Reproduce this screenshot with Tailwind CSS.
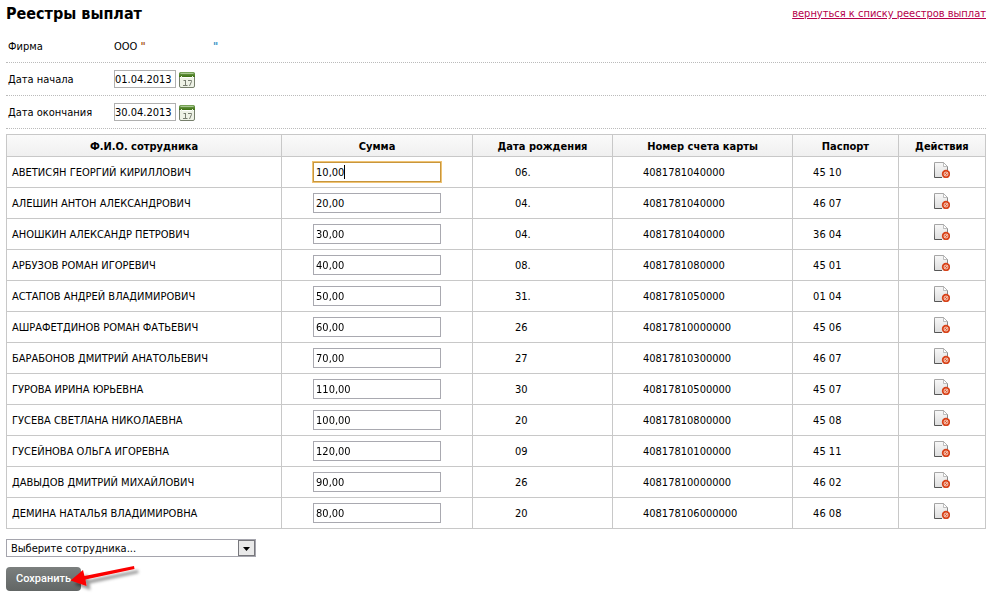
<!DOCTYPE html>
<html lang="ru">
<head>
    <meta charset="UTF-8">
    <meta name="viewport" content="width=device-width, initial-scale=1.0">
    <title>Реестры выплат</title>
    <script src="https://cdn.jsdelivr.net/npm/@tailwindcss/browser@4"></script>
</head>
<body class="bg-white text-black font-['DejaVu_Sans_Condensed','DejaVu_Sans',sans-serif] text-[11px] leading-4">
    <!-- Icons -->
    <svg class="absolute h-0 w-0" aria-hidden="true">
        <defs>
            <linearGradient id="calTop" x1="0" y1="0" x2="0" y2="1">
                <stop offset="0" stop-color="#7ba65c"/>
                <stop offset="1" stop-color="#3c7010"/>
            </linearGradient>
            <linearGradient id="docFill" x1="0" y1="0" x2="0" y2="1">
                <stop offset="0" stop-color="#f8f8f8"/>
                <stop offset="1" stop-color="#dedede"/>
            </linearGradient>
            <linearGradient id="docEdge" x1="0" y1="0" x2="0" y2="1">
                <stop offset="0" stop-color="#a8a8a8"/>
                <stop offset="1" stop-color="#555555"/>
            </linearGradient>
        </defs>
        <symbol id="icon-calendar" viewBox="0 0 16 16">
            <rect x="0.5" y="0.5" width="15" height="15" rx="1.5" fill="#eef2e6" stroke="#767f6c"/>
            <path d="M0 5V2Q0 0 2 0H14Q16 0 16 2V5Z" fill="url(#calTop)"/>
            <path d="M1.5 1.5H14.5" stroke="#a9c890"/>
            <path d="M1 5.500H15" stroke="#ffffff"/>
            <path d="M2.500 6V4M13.500 6V4" stroke="#e4efda"/>
            <path d="M4.500 8.500H6.500M6.500 8V14M4 13.500H8.500M9 8.500H12.500V9.500L10.500 14" fill="none" stroke="#777d70"/>
        </symbol>
        <symbol id="icon-doc-delete" viewBox="0 0 16 16">
            <path d="M0.5 0.5H9.5L13.5 4.5V15.5H0.5Z" fill="url(#docFill)"/>
            <path d="M13.5 8V4.5L9.5 0.5H0.5V15.5H8" fill="none" stroke="url(#docEdge)"/>
            <path d="M9.5 0.5V4.5H13.5Z" fill="#ffffff" stroke="#a5a5a5" stroke-width="0.7"/>
            <circle cx="12" cy="12" r="4.2" fill="#d8431a"/>
            <circle cx="12" cy="12" r="2" fill="#e0582c" stroke="#fbe3da" stroke-width="0.8"/>
            <path d="M10.600 13.400L13.400 10.600" stroke="#fbe3da" stroke-width="0.8"/>
        </symbol>
    </svg>

    <main class="pl-1.5 pr-2.5 pt-1 pb-2">
        <!-- Header -->
        <header class="flex items-start justify-between">
            <h1 class="text-base leading-5 font-bold">Реестры выплат</h1>
            <a href="#" class="pt-0.5 text-[#b5004b] underline">вернуться к списку реестров выплат</a>
        </header>

        <!-- Registry details -->
        <form id="registryForm" class="mt-1.5">
            <div class="flex items-center h-[33px] border-b border-dotted border-[#bbbbbb]">
                <span class="w-[108px] pl-0.5 pt-0.5">Фирма</span>
                <span class="w-[99px] pt-0.5">ООО <span class="font-bold text-[#a85a20]">"</span></span>
                <span class="pt-0.5 font-bold text-[#2f8fc4]">"</span>
            </div>
            <div class="flex items-center h-[33px] border-b border-dotted border-[#bbbbbb]">
                <label for="dateStart" class="w-[108px] pl-0.5 pt-0.5">Дата начала</label>
                <input id="dateStart" type="text" value="01.04.2013" class="w-[62px] h-[18px] border border-[#b0b0b0] bg-white">
                <button type="button" aria-label="Выбрать дату начала" class="ml-[3px] pt-0.5"><svg class="w-4 h-4"><use href="#icon-calendar"/></svg></button>
            </div>
            <div class="flex items-center h-[33px] border-b border-dotted border-[#bbbbbb]">
                <label for="dateEnd" class="w-[108px] pl-0.5 pt-0.5">Дата окончания</label>
                <input id="dateEnd" type="text" value="30.04.2013" class="w-[62px] h-[18px] border border-[#b0b0b0] bg-white">
                <button type="button" aria-label="Выбрать дату окончания" class="ml-[3px] pt-0.5"><svg class="w-4 h-4"><use href="#icon-calendar"/></svg></button>
            </div>
        </form>

        <!-- Payments -->
        <table class="mt-[5px] w-full table-fixed border-collapse border border-[#c8c8c8]">
            <colgroup>
                <col class="w-[28.1%]">
                <col class="w-[19.5%]">
                <col class="w-[14.3%]">
                <col class="w-[18.4%]">
                <col class="w-[10.8%]">
                <col class="w-[8.9%]">
            </colgroup>
            <thead>
                <tr class="h-[22px] bg-linear-to-b from-[#fafafa] to-[#efefef]">
                    <th class="border border-[#c8c8c8] pt-0.5">Ф.И.О. сотрудника</th>
                    <th class="border border-[#c8c8c8] pt-0.5">Сумма</th>
                    <th class="border border-[#c8c8c8] pt-0.5">Дата рождения</th>
                    <th class="border border-[#c8c8c8] pt-0.5">Номер счета карты</th>
                    <th class="border border-[#c8c8c8] pt-0.5">Паспорт</th>
                    <th class="border border-[#c8c8c8] pt-0.5">Действия</th>
                </tr>
            </thead>
            <tbody id="paymentRows"></tbody>
        </table>

        <!-- Add employee -->
        <div class="relative mt-2.5 w-[250px]">
            <select aria-label="Сотрудник" class="block w-full h-[18px] appearance-none border border-[#a5a5ad] bg-white pl-1 pr-5 pt-px leading-4">
                <option>Выберите сотрудника...</option>
            </select>
            <span class="pointer-events-none absolute right-px top-px flex h-4 w-[17px] items-center justify-center border border-[#77777c] bg-[#e9e9e9]">
                <svg class="mt-0.5 h-1 w-[7px]" viewBox="0 0 7 4"><path d="M0 0H7L3.5 4Z" fill="#000000"/></svg>
            </span>
        </div>

        <div class="relative mt-2.5 w-fit">
            <button type="submit" form="registryForm" class="block h-6 w-[75px] rounded-sm bg-linear-to-b from-[#7b7f7e] to-[#626665] text-center font-['Roboto',sans-serif] font-medium text-white">Сохранить</button>
            <!-- Pointer to the save button -->
            <svg class="pointer-events-none absolute left-16 -top-1.5 h-9 w-20" viewBox="0 0 80 36">
                <defs>
                    <filter id="arrowShadow" x="-20%" y="-40%" width="150%" height="200%">
                        <feDropShadow dx="4" dy="4" stdDeviation="1.5" flood-color="#000000" flood-opacity="0.4"/>
                    </filter>
                </defs>
                <path d="M64 5L64.500 8L15.500 18.500L16.500 25L0.500 19.500L13 9L14.500 15Z" fill="#fb0505" filter="url(#arrowShadow)"/>
            </svg>
        </div>
    </main>

    <script>
        const payments = [
            { name: 'АВЕТИСЯН ГЕОРГИЙ КИРИЛЛОВИЧ', sum: '10,00', birth: '06.', card: '4081781040000', passport: '45 10' },
            { name: 'АЛЕШИН АНТОН АЛЕКСАНДРОВИЧ', sum: '20,00', birth: '04.', card: '4081781040000', passport: '46 07' },
            { name: 'АНОШКИН АЛЕКСАНДР ПЕТРОВИЧ', sum: '30,00', birth: '04.', card: '4081781040000', passport: '36 04' },
            { name: 'АРБУЗОВ РОМАН ИГОРЕВИЧ', sum: '40,00', birth: '08.', card: '4081781080000', passport: '45 01' },
            { name: 'АСТАПОВ АНДРЕЙ ВЛАДИМИРОВИЧ', sum: '50,00', birth: '31.', card: '4081781050000', passport: '01 04' },
            { name: 'АШРАФЕТДИНОВ РОМАН ФАТЬЕВИЧ', sum: '60,00', birth: '26', card: '40817810000000', passport: '45 06' },
            { name: 'БАРАБОНОВ ДМИТРИЙ АНАТОЛЬЕВИЧ', sum: '70,00', birth: '27', card: '40817810300000', passport: '46 07' },
            { name: 'ГУРОВА ИРИНА ЮРЬЕВНА', sum: '110,00', birth: '30', card: '40817810500000', passport: '45 07' },
            { name: 'ГУСЕВА СВЕТЛАНА НИКОЛАЕВНА', sum: '100,00', birth: '20', card: '40817810800000', passport: '45 08' },
            { name: 'ГУСЕЙНОВА ОЛЬГА ИГОРЕВНА', sum: '120,00', birth: '09', card: '40817810100000', passport: '45 11' },
            { name: 'ДАВЫДОВ ДМИТРИЙ МИХАЙЛОВИЧ', sum: '90,00', birth: '26', card: '40817810000000', passport: '46 02' },
            { name: 'ДЕМИНА НАТАЛЬЯ ВЛАДИМИРОВНА', sum: '80,00', birth: '20', card: '408178106000000', passport: '46 08' }
        ];

        // Fill the table
        document.getElementById('paymentRows').innerHTML = payments.map((p, i) => `
            <tr class="h-[31px]">
                <td class="border border-[#c8c8c8] pl-[5px] pt-0.5 whitespace-nowrap">${p.name}</td>
                <td class="border border-[#c8c8c8]">
                    <div class="relative mx-auto w-32">
                        <input type="text" value="${p.sum}" aria-label="Сумма: ${p.name}" class="block h-5 w-full border border-[#a9a9b0] bg-white px-0.5 caret-transparent focus:border-[#c8963c] focus:outline-1 focus:outline-[#efc373]">
                        ${i === 0 ? '<span id="caret" class="pointer-events-none absolute left-[31px] top-[3px] h-3.5 w-px bg-black"></span>' : ''}
                    </div>
                </td>
                <td class="border border-[#c8c8c8] pl-[42px] pt-0.5">${p.birth}</td>
                <td class="border border-[#c8c8c8] pl-[30px] pt-0.5">${p.card}</td>
                <td class="border border-[#c8c8c8] pl-5 pt-0.5">${p.passport}</td>
                <td class="border border-[#c8c8c8]">
                    <button type="button" aria-label="Удалить: ${p.name}" class="mx-auto block pb-1"><svg class="h-4 w-4"><use href="#icon-doc-delete"/></svg></button>
                </td>
            </tr>
        `).join('');

        // Start editing from the first sum
        const firstSum = document.querySelector('#paymentRows input');
        firstSum.focus();
        firstSum.setSelectionRange(firstSum.value.length, firstSum.value.length);

        // Back to the native caret once the user starts editing
        ['pointerdown', 'keydown'].forEach((type) => {
            document.addEventListener(type, () => {
                document.getElementById('caret')?.remove();
                document.querySelectorAll('#paymentRows input').forEach((input) => input.classList.remove('caret-transparent'));
            }, { once: true });
        });
    </script>
</body>
</html>
